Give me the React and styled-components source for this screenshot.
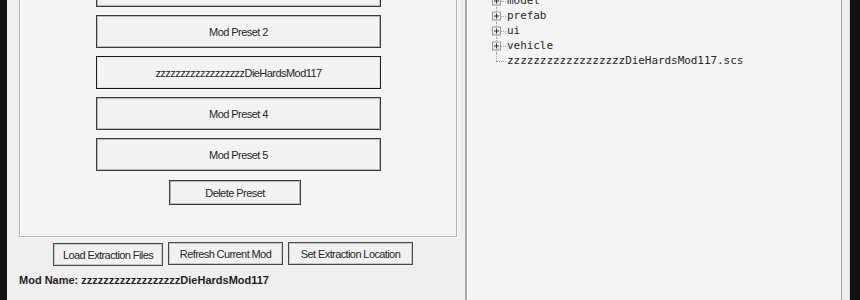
import React from "react";
import styled, { createGlobalStyle } from "styled-components";

const Global = createGlobalStyle`
  html, body { margin: 0; padding: 0; background: #121212; overflow: hidden; }
  body { width: 860px; height: 300px; }
  #root { height: 300px; overflow: hidden; }
`;

const Frame = styled.div`
  margin: -50px 10px 0 7px;
  height: 360px;
  background: #efefef;
  display: flex;
  border-right: 1px solid #d8d8d8;
  box-sizing: border-box;
`;

const LeftColumn = styled.div`
  width: 446px;
  padding: 0 0 0 12px;
  display: flex;
  flex-direction: column;
`;

const GroupBox = styled.div`
  width: 438px;
  box-sizing: border-box;
  background: #f4f4f4;
  border: 1px solid #b4b4b4;
  box-shadow: 1px 1px 0 #ffffff, inset 1px 1px 0 #ffffff;
  padding: 23px 0 31px;
  display: flex;
  flex-direction: column;
  align-items: center;
`;

const PresetButton = styled.button`
  width: 285px;
  height: 33px;
  margin: 0 0 8px 1px;
  box-sizing: border-box;
  background: #f3f3f3;
  border: 1px solid ${(p) => (p.$active ? "#1c1c1c" : "#3c3c3c")};
  box-shadow: inset 0 0 0 1px ${(p) => (p.$active ? "#e4e4e4" : "#b9b9b9")};
  font-family: "Liberation Sans", Arial, sans-serif;
  font-size: 11px;
  letter-spacing: -0.55px;
  color: #262626;
  padding: 0;
  cursor: default;
`;

const DeleteButton = styled(PresetButton)`
  width: 132px;
  height: 25px;
  margin: 1px 6px 0 0;
`;

const ActionRow = styled.div`
  display: flex;
  gap: 5px;
  padding: 5px 0 0 34px;
`;

const ActionButton = styled.button`
  height: 23px;
  width: ${(p) => p.$w}px;
  margin-top: ${(p) => p.$dy || 0}px;
  box-sizing: border-box;
  background: #f1f1f1;
  border: 1px solid #4a4a4a;
  box-shadow: inset 0 0 0 1px #c8c8c8;
  font-family: "Liberation Sans", Arial, sans-serif;
  font-size: 11px;
  letter-spacing: -0.6px;
  color: #262626;
  padding: 0;
`;

const ModName = styled.div`
  margin-top: 8px;
  font-family: "Liberation Sans", Arial, sans-serif;
  font-weight: bold;
  font-size: 11px;
  color: #1e1e1e;
`;

const TreePanel = styled.div`
  width: 377px;
  box-sizing: border-box;
  background: #f4f4f4;
  border-left: 2px solid #a9a9a9;
  border-right: 1px solid #a2a2a2;
  padding: 43px 0 0 25px;
  font-family: "DejaVu Sans Mono", Consolas, monospace;
  font-size: 11px;
  letter-spacing: -0.06px;
  color: #262626;
`;

const TreeRow = styled.div`
  display: flex;
  align-items: center;
  height: 15px;
`;

const Connector = styled.div`
  width: 14px;
  height: 100%;
  position: relative;
  flex: none;
  &::before {
    content: "";
    position: absolute;
    left: 4px;
    top: 0;
    bottom: ${(p) => (p.$last ? "50%" : "0")};
    border-left: 1px dotted #a0a0a0;
  }
  &::after {
    content: "";
    position: absolute;
    left: 4px;
    width: 10px;
    top: 50%;
    border-top: 1px dotted #a0a0a0;
  }
`;

const ExpandBox = styled.div`
  position: absolute;
  left: 0;
  top: 50%;
  transform: translateY(-50%);
  width: 9px;
  height: 9px;
  box-sizing: border-box;
  border: 1px solid #9a9a9a;
  background: linear-gradient(#ffffff, #e2e2e2);
  z-index: 1;
  &::before {
    content: "";
    position: absolute;
    left: 1px;
    right: 1px;
    top: 3px;
    height: 1px;
    background: #333;
  }
  &::after {
    content: "";
    position: absolute;
    top: 1px;
    bottom: 1px;
    left: 3px;
    width: 1px;
    background: #333;
  }
`;

const Label = styled.span`
  padding-left: 1px;
  white-space: nowrap;
`;

const folders = ["model", "prefab", "ui", "vehicle"];
const presets = ["Mod Preset 1", "Mod Preset 2", "zzzzzzzzzzzzzzzzzzDieHardsMod117", "Mod Preset 4", "Mod Preset 5"];

export default function App() {
  return (
    <>
      <Global />
      <Frame>
        <LeftColumn>
          <GroupBox>
            {presets.map((p) => (
              <PresetButton key={p} $active={p.startsWith("zzz")}>
                {p}
              </PresetButton>
            ))}
            <DeleteButton>Delete Preset</DeleteButton>
          </GroupBox>
          <ActionRow>
            <ActionButton $w={110} $dy={1}>Load Extraction Files</ActionButton>
            <ActionButton $w={115}>Refresh Current Mod</ActionButton>
            <ActionButton $w={125}>Set Extraction Location</ActionButton>
          </ActionRow>
          <ModName>Mod Name: zzzzzzzzzzzzzzzzzzDieHardsMod117</ModName>
        </LeftColumn>
        <TreePanel>
          {folders.map((f) => (
            <TreeRow key={f}>
              <Connector>
                <ExpandBox />
              </Connector>
              <Label>{f}</Label>
            </TreeRow>
          ))}
          <TreeRow>
            <Connector $last />
            <Label>zzzzzzzzzzzzzzzzzzDieHardsMod117.scs</Label>
          </TreeRow>
        </TreePanel>
      </Frame>
    </>
  );
}
